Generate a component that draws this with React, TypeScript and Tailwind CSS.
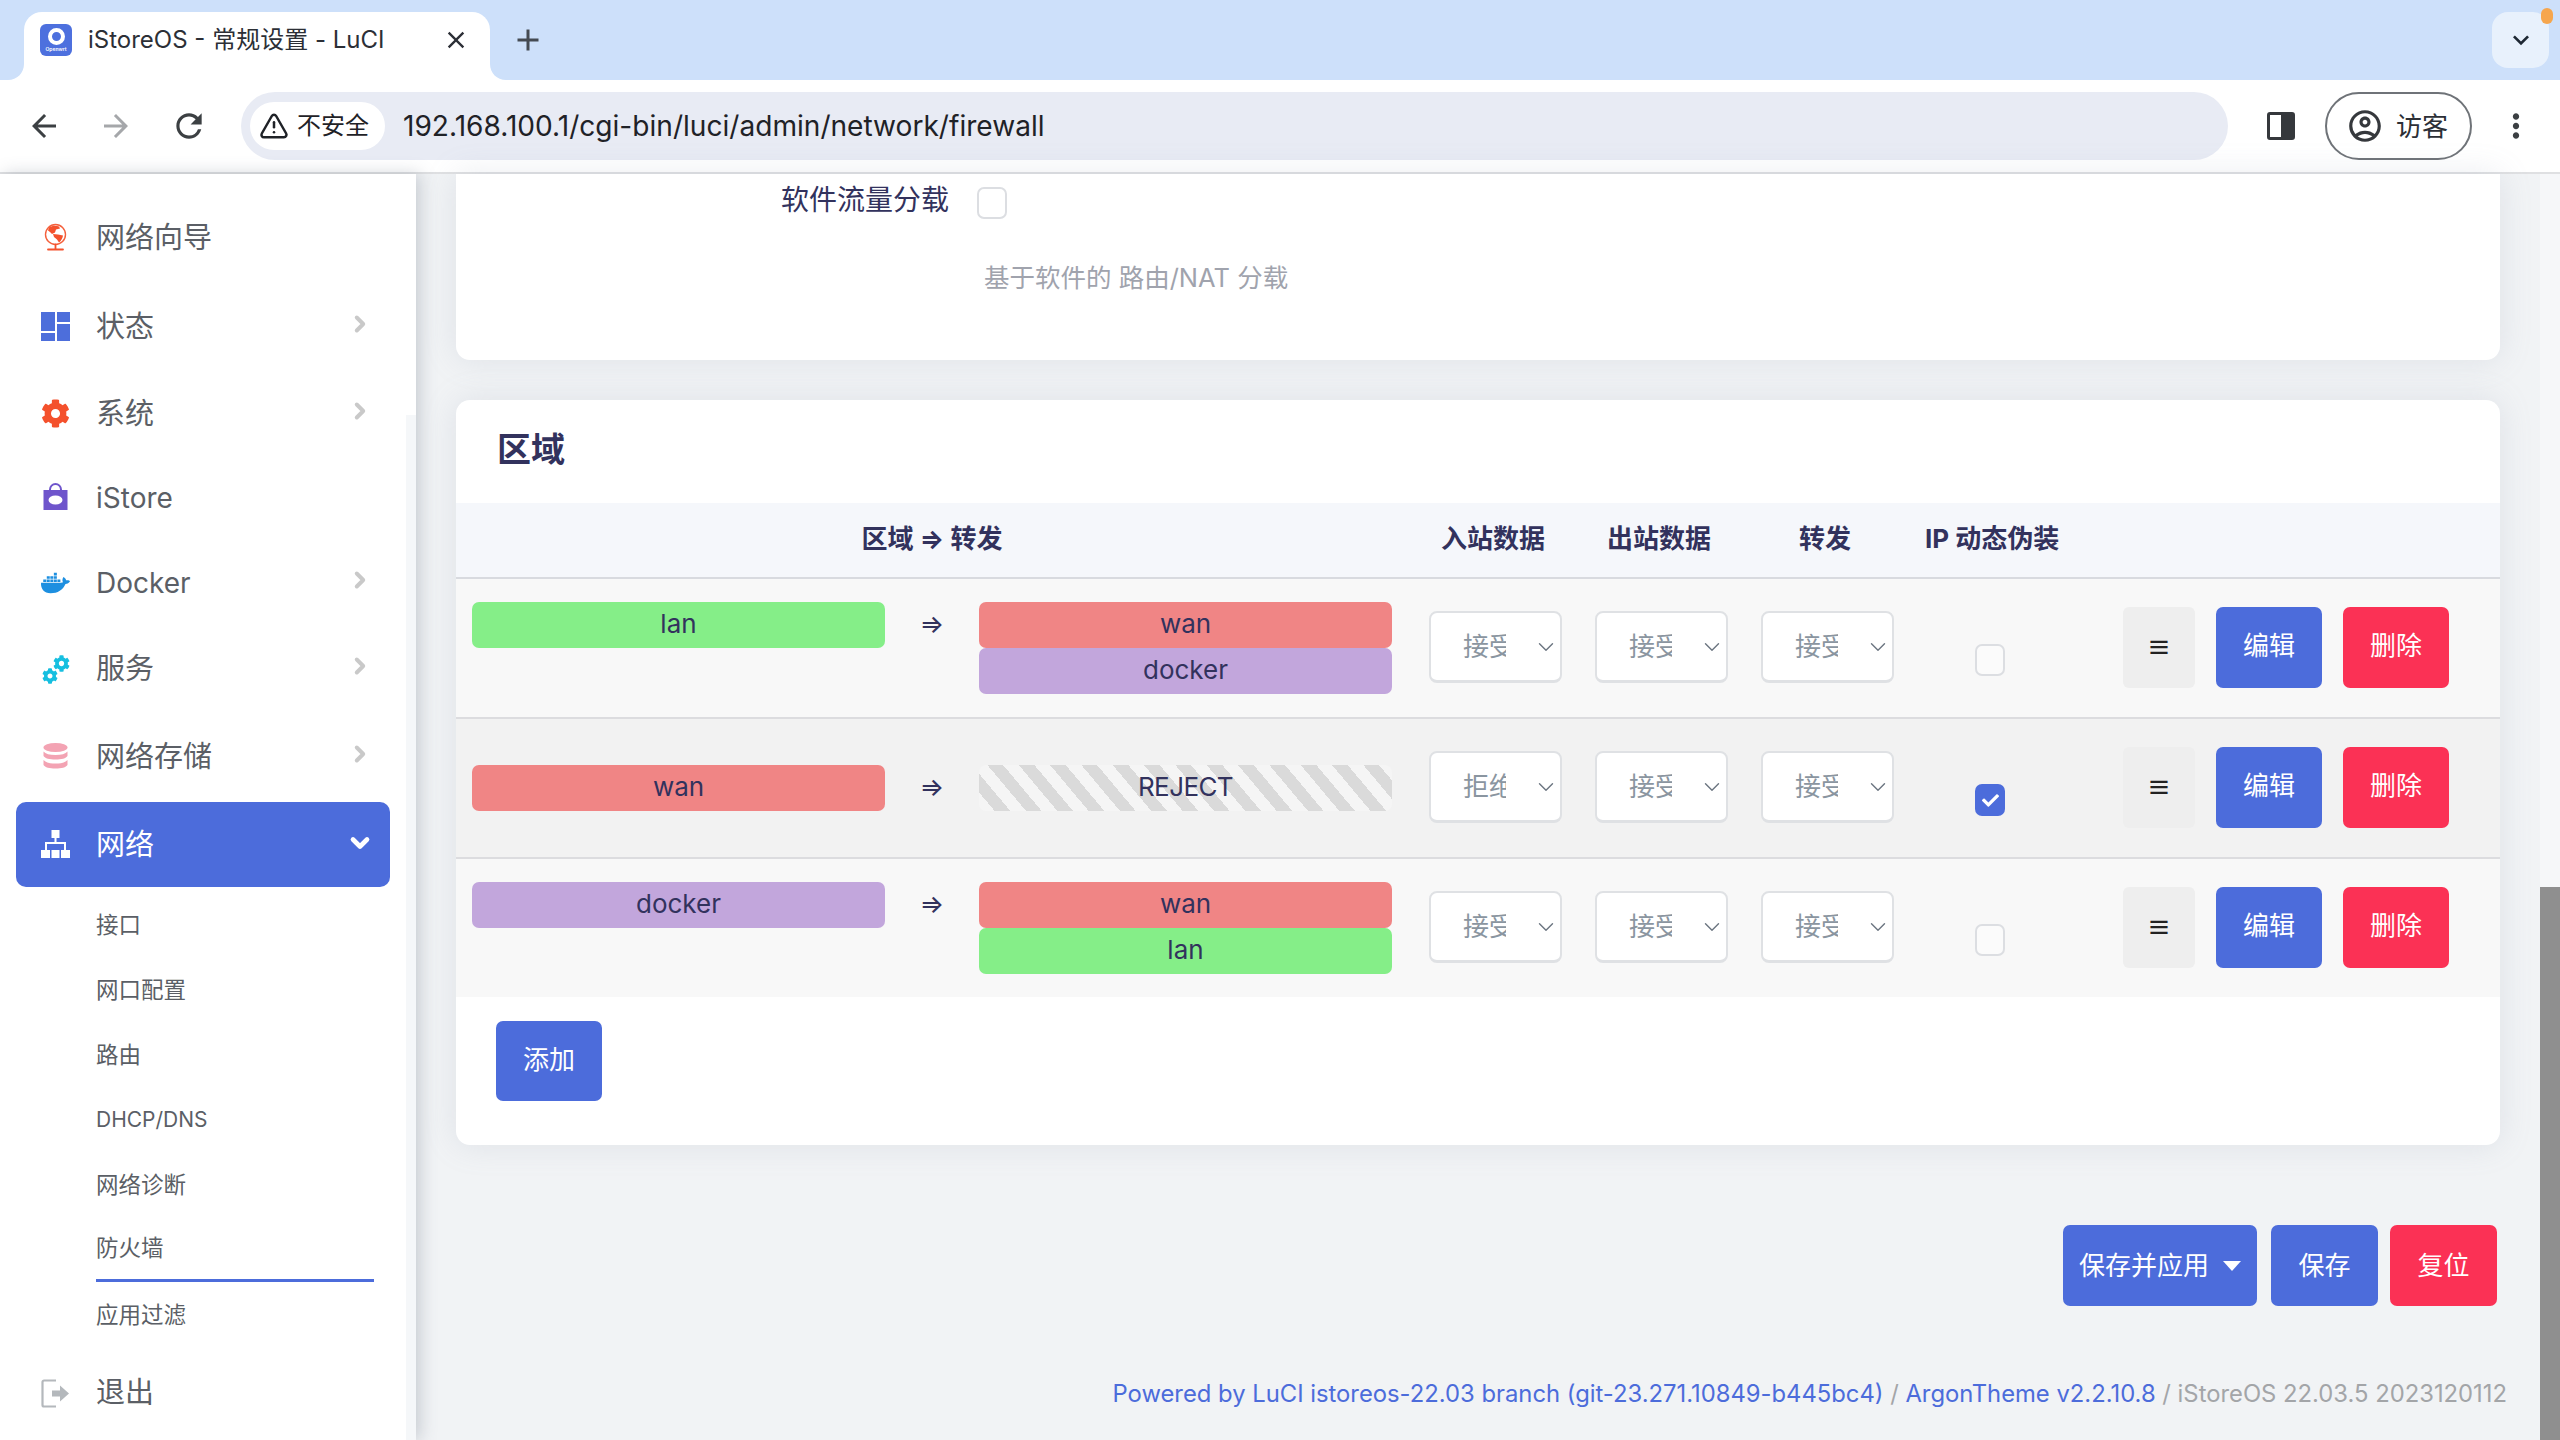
import React from "react";
import { ChevronDown, ChevronRight, TriangleAlert } from "lucide-react";
import { FaCheck, FaCog, FaDocker } from "react-icons/fa";
import {
  MdAdd,
  MdArrowBack,
  MdArrowForward,
  MdClose,
  MdKeyboardArrowDown,
  MdMoreVert,
  MdOutlineAccountCircle,
  MdRefresh,
} from "react-icons/md";

const FONT = "font-['Inter','Noto_Sans_CJK_SC',sans-serif]";

/* sidebar icons */
function GlobeIcon() {
  return (
    <svg width="29" height="29" viewBox="0 0 29 29" fill="none">
      <circle cx="14.5" cy="11.5" r="10" stroke="#f4603c" strokeWidth="1.4" />
      <path d="M8 4.500c3-2 7-2.500 10-1l1 2-4 1-1 3-3 1.500-2-2-2-1.500z" fill="#f4512c" />
      <path d="M12 11l5 .5 5 1c-.5 3-2 5.500-4 7l-2-3-3-2.500z" fill="#f4512c" />
      <path d="M14.500 21.500v4M7 26.500h15" stroke="#f4512c" strokeWidth="1.800" strokeLinecap="round" />
    </svg>
  );
}

function StatusIcon() {
  return (
    <svg width="29" height="29" viewBox="0 0 29 29" fill="#4d6edb">
      <rect x="0" y="0" width="14" height="19" />
      <rect x="0" y="21" width="14" height="8" />
      <rect x="16" y="0" width="13" height="10" />
      <rect x="16" y="12" width="13" height="17" />
    </svg>
  );
}

function BagIcon() {
  return (
    <svg width="29" height="29" viewBox="0 0 29 29" fill="none">
      <path d="M9 8V6.500a5.500 5.500 0 0 1 11 0V8" stroke="#6f55cc" strokeWidth="2" />
      <rect x="2.500" y="7" width="24" height="20" fill="#6f55cc" />
      <ellipse cx="14.500" cy="17" rx="7" ry="4.500" fill="#fff" />
    </svg>
  );
}

function ServicesIcon() {
  return (
    <div className="relative h-[29px] w-[29px]">
      <FaCog className="absolute bottom-0 left-[1px] text-[16px] text-[#16bfe0]" />
      <FaCog className="absolute right-0 top-0 text-[17px] text-[#16bfe0]" />
    </div>
  );
}

function StorageIcon() {
  return (
    <svg width="29" height="29" viewBox="0 0 29 29" fill="#f3a3b3">
      <ellipse cx="14.500" cy="5.500" rx="12" ry="4.500" />
      <path d="M2.500 9.500c2 2.500 6 3.500 12 3.500s10-1 12-3.500V14c-1.500 2.500-6 3.500-12 3.500S4 16.500 2.500 14z" />
      <path d="M2.500 18c2 2.500 6 3.500 12 3.500s10-1 12-3.500v5c-1.500 2.500-6 3.500-12 3.500S4 25.500 2.500 23z" />
    </svg>
  );
}

function NetworkIcon() {
  return (
    <svg width="29" height="29" viewBox="0 0 29 29" fill="#fff">
      <rect x="10.500" y="0" width="8" height="8" />
      <rect x="13.500" y="8" width="2" height="6" />
      <rect x="4" y="12" width="21" height="2" />
      <rect x="4" y="12" width="2" height="8" />
      <rect x="23" y="12" width="2" height="8" />
      <rect x="0" y="20" width="9" height="8" />
      <rect x="10.500" y="20" width="8" height="8" />
      <rect x="20" y="20" width="9" height="8" />
    </svg>
  );
}

function LogoutIcon() {
  return (
    <svg width="29" height="29" viewBox="0 0 29 29" fill="none">
      <path d="M15 1.500H3a1.500 1.500 0 0 0-1.500 1.500v23A1.500 1.500 0 0 0 3 27.500h12" stroke="#b4b8bc" strokeWidth="2.200" />
      <path d="M11 11.500h8V6.500l9 8-9 8v-5h-8z" fill="#b4b8bc" />
    </svg>
  );
}

const NAV = [
  { label: "网络向导", icon: <GlobeIcon />, h: "h-[89px]", text: "text-[29px]" },
  { label: "状态", icon: <StatusIcon />, h: "h-[89px]", text: "text-[29px]", arrow: true },
  { label: "系统", icon: <FaCog className="text-[29px] text-[#f4512c]" />, h: "h-[85px]", text: "text-[29px]", arrow: true },
  { label: "iStore", icon: <BagIcon />, h: "h-[83px]", text: "text-[28px]" },
  { label: "Docker", icon: <FaDocker className="text-[30px] text-[#1d8fe0]" />, h: "h-[88px]", text: "text-[28px]", arrow: true },
  { label: "服务", icon: <ServicesIcon />, h: "h-[84px]", text: "text-[29px]", arrow: true },
  { label: "网络存储", icon: <StorageIcon />, h: "h-[91px]", text: "text-[29px]", arrow: true },
];

const SUB_NAV = ["接口", "网口配置", "路由", "DHCP/DNS", "网络诊断", "防火墙", "应用过滤"];

function Sidebar() {
  return (
    <aside className="relative z-10 flex w-[416px] shrink-0 bg-white shadow-[4px_0_16px_rgba(90,100,120,0.28)]">
      <nav className="w-[406px] pt-[19px] text-[29px] text-[#5b5f66]">
        {NAV.map((item) => (
          <div key={item.label} className={`${item.h} ${item.text} mx-4 flex w-[374px] items-center px-[25px]`}>
            <div className="flex w-[29px] items-center justify-center">{item.icon}</div>
            <span className="ml-[26px]">{item.label}</span>
            {item.arrow && (
              <ChevronRight className="ml-auto mr-[-8px] mt-[-6px] text-[#c9c9c9]" size={26} strokeWidth={3.6} />
            )}
          </div>
        ))}
        <div className="mx-4 flex h-[85px] w-[374px] items-center rounded-[10px] bg-[#4c6cdb] pl-[25px] pr-[16px] text-white">
          <NetworkIcon />
          <span className="ml-[26px]">网络</span>
          <ChevronDown className="ml-auto mt-[-4px] text-white" size={28} strokeWidth={4} />
        </div>
        <div className="mt-[5px] ml-[96px] w-[278px] text-[22.5px]">
          {SUB_NAV.map((label) => (
            <div
              key={label}
              className={`flex h-[65px] items-center ${label === "防火墙" ? "border-b-[3px] border-[#4c6cdb]" : ""} ${label === "DHCP/DNS" ? "text-[21px]" : ""}`}
            >
              {label}
            </div>
          ))}
        </div>
        <div className="mx-4 flex h-[92px] w-[374px] items-center px-[25px]">
          <LogoutIcon />
          <span className="ml-[26px]">退出</span>
        </div>
      </nav>
      <div className="flex w-[10px] flex-col">
        <div className="h-[241px]" />
        <div className="flex-1 bg-[#f5f7f9]" />
      </div>
    </aside>
  );
}

/* browser chrome */
function TabStrip() {
  return (
    <div className="flex h-[80px] shrink-0 bg-[#cde0fa] pl-[24px] pt-[12px]">
      <div className="relative flex h-[68px] w-[466px] items-center rounded-t-[18px] bg-white pb-[12px] pl-[16px]">
        <svg className="absolute bottom-0 left-[-16px]" width="16" height="16" viewBox="0 0 16 16">
          <path d="M16 0v16H0c9 0 16-7 16-16z" fill="#fff" />
        </svg>
        <svg className="absolute bottom-0 right-[-16px]" width="16" height="16" viewBox="0 0 16 16">
          <path d="M0 0v16h16C7 16 0 9 0 0z" fill="#fff" />
        </svg>
        <div className="relative flex h-[32px] w-[32px] flex-col items-center rounded-[6px] bg-[#4d70de]">
          <div className="mt-[4px] h-[17px] w-[17px] rounded-full border-[4px] border-white" />
          <div className="mt-[1px] text-[5px] leading-[6px] font-semibold text-white">Openwrt</div>
        </div>
        <span className="ml-[16px] whitespace-nowrap text-[24px] text-[#2c2f36]">iStoreOS - 常规设置 - LuCI</span>
        <MdClose className="absolute left-[418px] text-[28px] text-[#2c2f36]" />
      </div>
      <MdAdd className="ml-[20px] mt-[10px] text-[36px] text-[#444a52]" />
      <div className="relative ml-auto mr-[11px] flex h-[56px] w-[57px] items-center justify-center rounded-[16px] bg-[#e8f1fc]">
        <MdKeyboardArrowDown className="text-[32px] text-[#1d2733]" />
        <span className="absolute right-[-4px] top-[-4px] h-[16px] w-[12px] rounded-full bg-[#f6a64d]" />
      </div>
    </div>
  );
}

function Toolbar() {
  return (
    <div className="flex h-[94px] shrink-0 items-center border-b-[2px] border-[#dfe0e2] bg-white pl-[26px]">
      <MdArrowBack className="text-[36px] text-[#3c4043]" />
      <MdArrowForward className="ml-[36px] text-[36px] text-[#a5a7aa]" />
      <MdRefresh className="ml-[36px] text-[38px] text-[#3c4043]" />
      <div className="ml-[33px] flex h-[68px] w-[1987px] items-center rounded-full bg-[#e8ebf4] pl-[9px]">
        <div className="flex h-[48px] w-[135px] items-center rounded-full bg-white pl-[9px] text-[24px] text-[#1f2227]">
          <TriangleAlert size={30} strokeWidth={2} />
          <span className="ml-[8px] whitespace-nowrap">不安全</span>
        </div>
        <span className="ml-[18px] text-[28.1px] text-[#1f2227]">192.168.100.1/cgi-bin/luci/admin/network/firewall</span>
      </div>
      <div className="ml-[39px] flex h-[28px] w-[28px] rounded-[3px] border-[3px] border-[#35383c] bg-white">
        <div className="ml-auto h-full w-[11px] bg-[#35383c]" />
      </div>
      <div className="ml-[30px] flex h-[68px] w-[147px] items-center rounded-full border-[2px] border-[#6f7378] pl-[19px] text-[26px] text-[#2c2f36]">
        <MdOutlineAccountCircle className="text-[38px] text-[#35383c]" />
        <span className="ml-[12px] whitespace-nowrap">访客</span>
      </div>
      <MdMoreVert className="ml-[25px] text-[38px] text-[#3c4043]" />
    </div>
  );
}

/* firewall zones table */
function ZonePill({ zone }: { zone: string }) {
  const color = {
    lan: "bg-[#85ee88]",
    wan: "bg-[#f08585]",
    docker: "bg-[#c2a6dc]",
    REJECT:
      "bg-[repeating-linear-gradient(50deg,#f5f5f5_0,#f5f5f5_12px,#dadada_12px,#dadada_24px)] tracking-[-0.6px]",
  }[zone];
  return (
    <div className={`${color} flex h-[46px] w-[413px] items-center justify-center rounded-[7px] pb-[3px] text-[26px]`}>
      {zone}
    </div>
  );
}

function PolicySelect({ value }: { value: string }) {
  return (
    <div className="flex h-[72px] w-[133px] items-center rounded-[8px] border-[2px] border-b-[3px] border-[#dfe1e4] bg-white pl-[32px] text-[26px] text-[#8a95a0]">
      <span className="w-[43px] overflow-hidden whitespace-nowrap">{value}</span>
      <ChevronDown className="ml-[27px] text-[#6b7580]" size={26} strokeWidth={1.3} />
    </div>
  );
}

function ZoneRow({
  from,
  to,
  input,
  masq,
  rowClass,
}: {
  from: string;
  to: string[];
  input: string;
  masq?: boolean;
  rowClass: string;
}) {
  const single = to.length === 1;
  return (
    <div className={`${rowClass} flex shrink-0 pl-4`}>
      <div className={`${single ? "pt-[46px]" : "pt-[23px]"} flex w-[920px]`}>
        <ZonePill zone={from} />
        <div className="flex h-[42px] w-[94px] items-center justify-center text-[26px]">⇒</div>
        <div>
          {to.map((z) => (
            <ZonePill key={z} zone={z} />
          ))}
        </div>
      </div>
      <div className="ml-[37px] flex w-[465px] gap-[33px] pt-[32px]">
        <PolicySelect value={input} />
        <PolicySelect value="接受" />
        <PolicySelect value="接受" />
      </div>
      <div className="ml-[81px] pt-[65px]">
        {masq ? (
          <div className="flex h-[32px] w-[30px] items-center justify-center rounded-[7px] bg-[#4c6cdb]">
            <FaCheck className="text-[17px] text-white" />
          </div>
        ) : (
          <div className="h-[32px] w-[30px] rounded-[7px] border-[2px] border-[#dcdee2] bg-[#fbfbfb]" />
        )}
      </div>
      <div className="ml-[118px] flex pt-[28px] text-[26px] text-white">
        <div className="flex h-[81px] w-[72px] items-center justify-center rounded-[6px] bg-[#eeeeee] text-[24px] font-bold text-[#222]">
          ≡
        </div>
        <button className="ml-[21px] h-[81px] w-[106px] rounded-[7px] bg-[#4c6cdb] pb-[4px]">编辑</button>
        <button className="ml-[21px] h-[81px] w-[106px] rounded-[7px] bg-[#fb3155] pb-[4px]">删除</button>
      </div>
    </div>
  );
}

export default function App() {
  return (
    <div className={`${FONT} flex h-[1440px] w-[2560px] flex-col overflow-hidden bg-[#f1f3f5] text-[#32325d]`}>
      <TabStrip />
      <Toolbar />
      <div className="flex min-h-0 flex-1">
        <Sidebar />
        <main className="w-[2124px] shrink-0 px-10">
          <section className="h-[186px] rounded-b-[14px] bg-white shadow-[0_0_32px_rgba(136,152,170,0.18)]">
            <div className="flex items-start pl-[325px] pt-[13px]">
              <span className="text-[28px] leading-[26px]">软件流量分载</span>
              <div className="ml-[28px] h-[32px] w-[30px] rounded-[7px] border-[2px] border-[#dcdee2] bg-white" />
            </div>
            <div className="pl-[528px] pt-[41px] text-[25.5px] leading-[36px] text-[#a0a3ad]">基于软件的 路由/NAT 分载</div>
          </section>

          <section className="mt-10 flex h-[745px] flex-col rounded-[14px] bg-white shadow-[0_0_32px_rgba(136,152,170,0.18)]">
            <h3 className="flex h-[103px] shrink-0 items-start pl-[41px] pt-[26px] text-[34px] leading-[48px] font-bold">区域</h3>
            <div className="flex h-[76px] shrink-0 items-center border-b-[2px] border-[#d8dadf] bg-[#f5f7fb] pb-[3px] pl-4 text-[26px] font-bold">
              <div className="w-[920px] text-center">区域 ⇒ 转发</div>
              <div className="ml-[49px] w-[166px]">入站数据</div>
              <div className="w-[192px]">出站数据</div>
              <div className="w-[126px]">转发</div>
              <div>IP 动态伪装</div>
            </div>
            <ZoneRow
              from="lan"
              to={["wan", "docker"]}
              input="接受"
              rowClass="h-[140px] border-b-[2px] border-[#dcdcdf] bg-[#f8f8f8]"
            />
            <ZoneRow
              from="wan"
              to={["REJECT"]}
              input="拒绝"
              masq
              rowClass="h-[140px] border-b-[2px] border-[#dcdcdf] bg-[#f2f2f2]"
            />
            <ZoneRow from="docker" to={["wan", "lan"]} input="接受" rowClass="h-[138px] bg-[#f8f8f8]" />
            <div className="pl-[40px] pt-[24px]">
              <button className="h-[80px] w-[106px] rounded-[7px] bg-[#4c6cdb] pb-[3px] text-[26px] text-white">添加</button>
            </div>
          </section>

          <div className="mr-[3px] mt-[80px] flex justify-end text-[26px] text-white">
            <button className="flex h-[81px] w-[194px] items-center justify-center gap-[14px] rounded-[7px] bg-[#4c6cdb]">
              <span className="whitespace-nowrap">保存并应用</span>
              <span className="h-0 w-0 border-x-[9px] border-t-[10px] border-x-transparent border-t-white" />
            </button>
            <button className="ml-[14px] h-[81px] w-[107px] rounded-[7px] bg-[#4c6cdb]">保存</button>
            <button className="ml-[12px] h-[81px] w-[107px] rounded-[7px] bg-[#fb3155]">复位</button>
          </div>

          <footer className="mr-[-7px] mt-[70px] whitespace-nowrap text-right text-[23.8px] text-[#4c6cdb]">
            Powered by LuCI istoreos-22.03 branch (git-23.271.10849-b445bc4) <span className="text-[#a3a5a8]">/</span> ArgonTheme v2.2.10.8 <span className="text-[#a3a5a8]">/ iStoreOS 22.03.5 2023120112</span>
          </footer>
        </main>
        <div className="flex w-[20px] shrink-0 flex-col bg-[#f6f7f9]">
          <div className="h-[713px]" />
          <div className="flex-1 bg-[#8f8f8f]" />
        </div>
      </div>
    </div>
  );
}
